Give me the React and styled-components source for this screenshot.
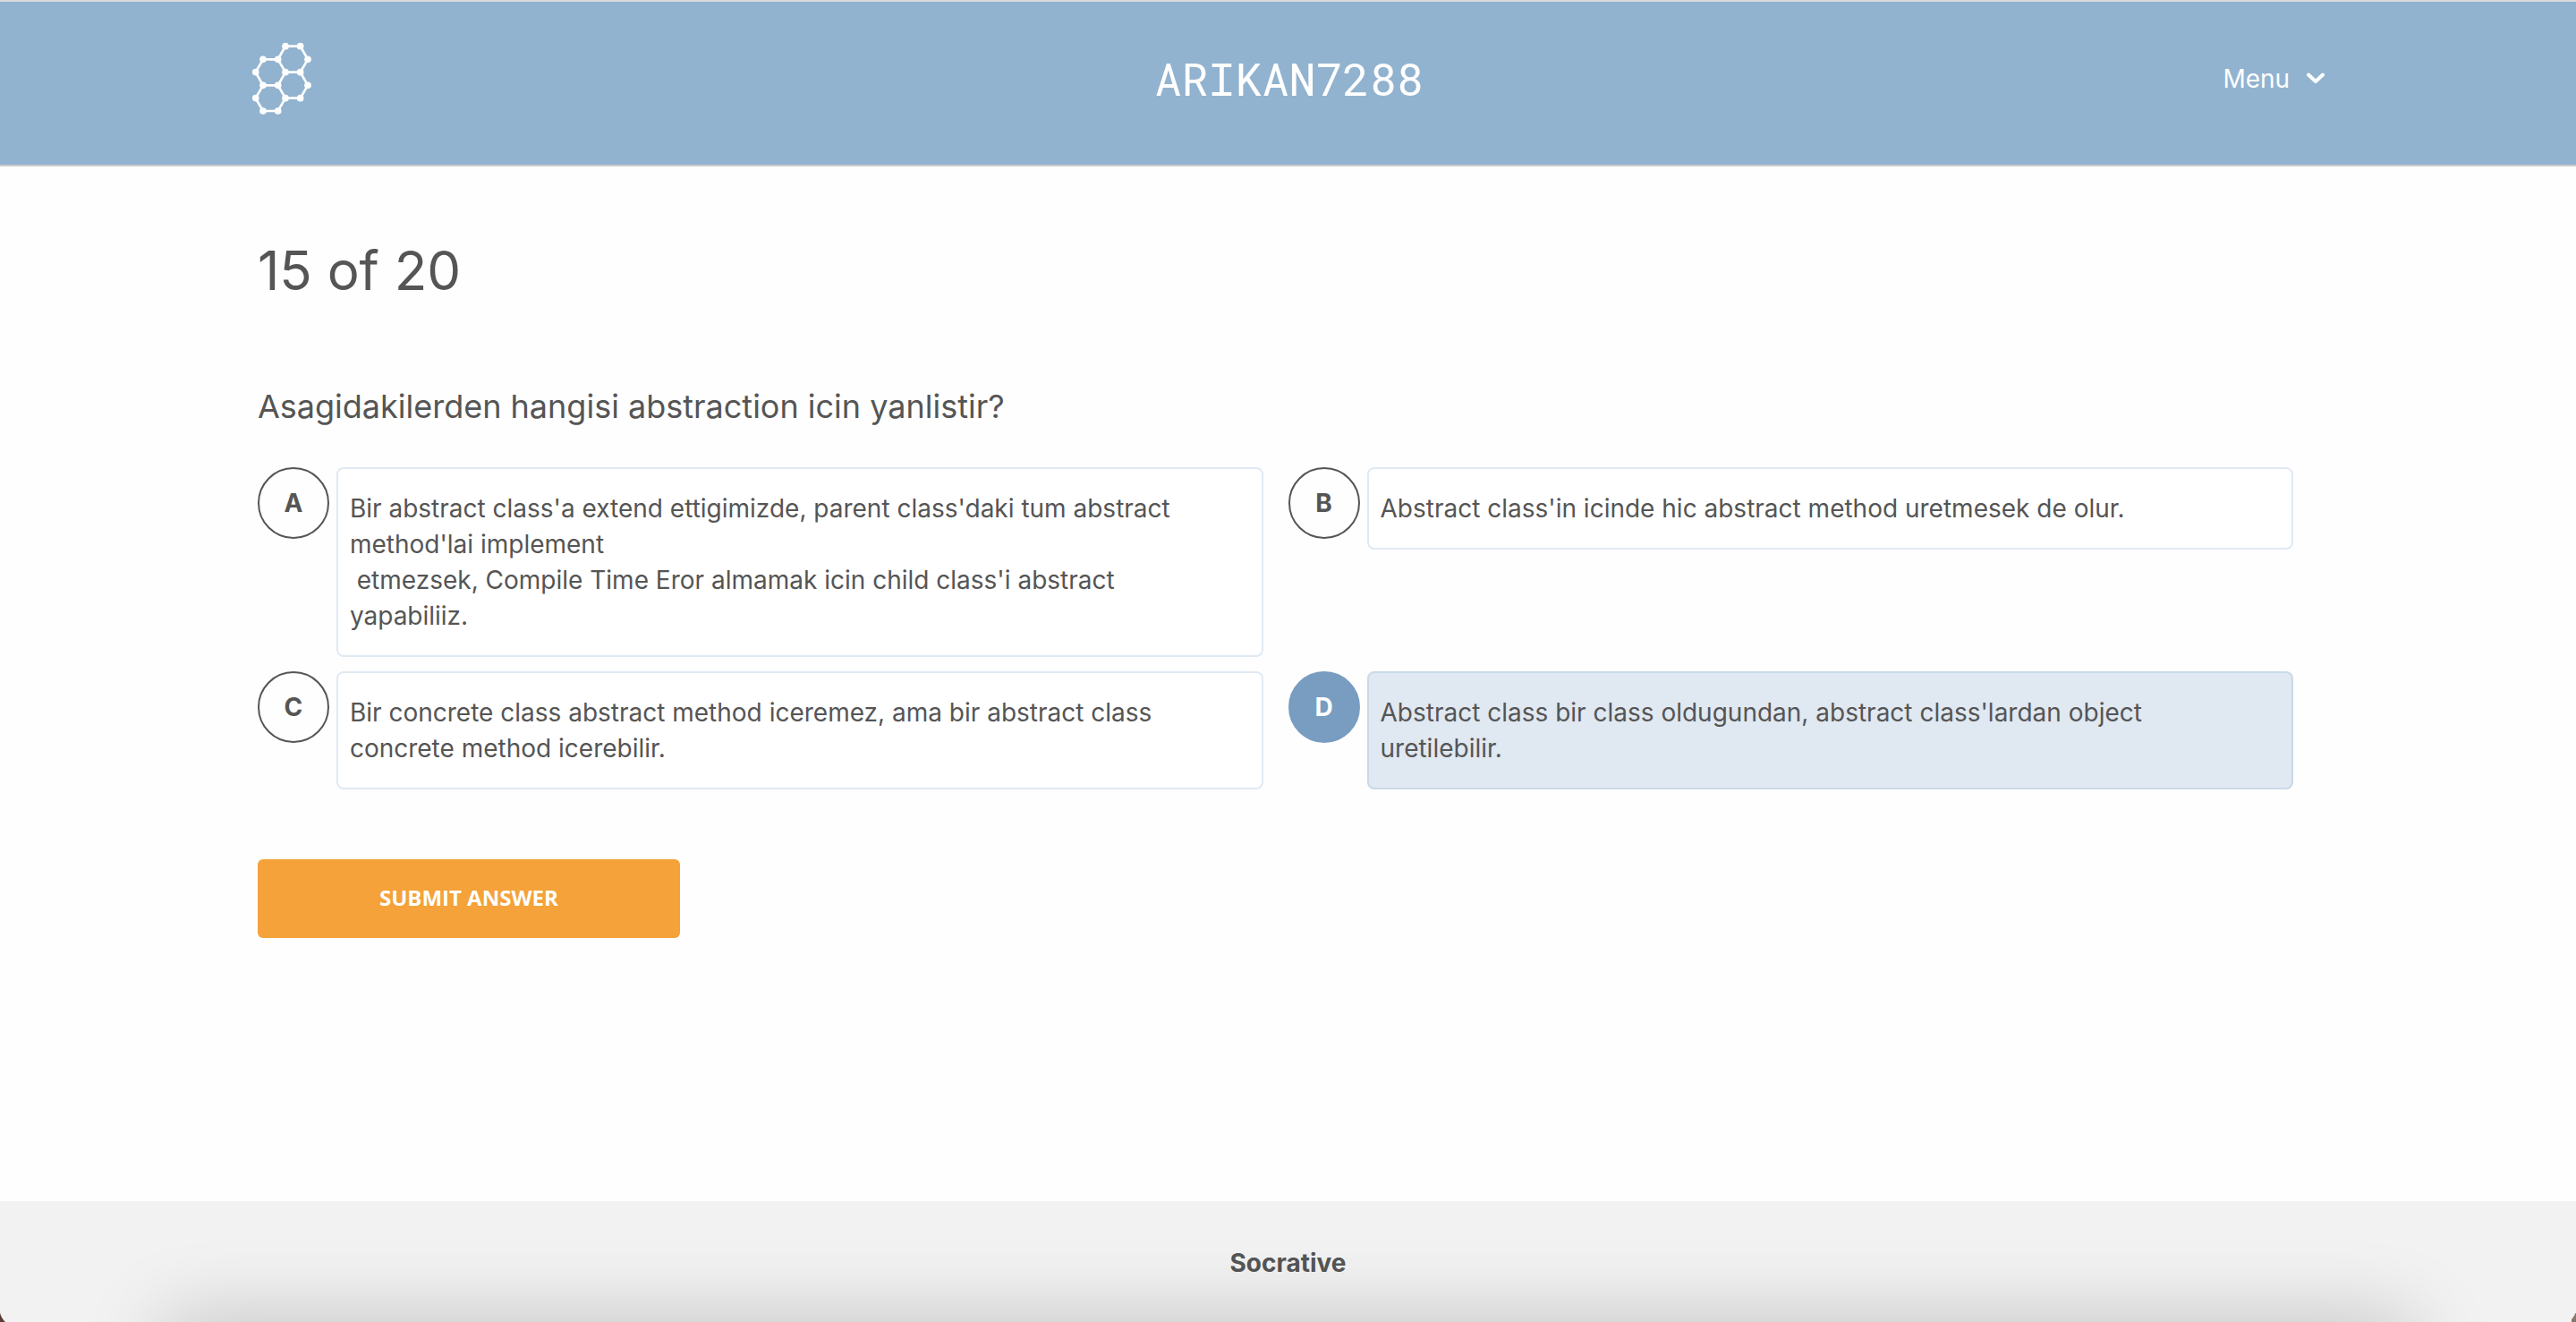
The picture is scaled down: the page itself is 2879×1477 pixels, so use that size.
import React, { useState } from "react";
import styled, { createGlobalStyle } from "styled-components";

const GlobalStyle = createGlobalStyle`
  *, *::before, *::after { box-sizing: border-box; }
  body {
    margin: 0;
    background: #fefefe;
    color: #555555;
    font-family: Inter, "Liberation Sans", sans-serif;
    font-size: 28px;
    line-height: 40px;
  }
`;

const Page = styled.div`
  display: flex;
  flex-direction: column;
  min-height: 100vh;
`;

const Header = styled.header`
  display: grid;
  grid-template-columns: 1fr auto 1fr;
  align-items: start;
  height: 186px;
  padding: 44px calc(10% - 8px) 0 calc(10% - 6px);
  background: #92b3cf;
  border-top: 2px solid #d9d9d9;
  border-bottom: 2px solid #cccccc;
  color: #ffffff;
`;

const LogoLink = styled.a`
  display: flex;
  justify-self: start;
`;

const RoomName = styled.div`
  font-family: "Roboto Mono", "Liberation Mono", monospace;
  font-size: 50px;
  font-weight: 400;
  line-height: 84px;
`;

const MenuButton = styled.button`
  display: flex;
  align-items: center;
  justify-self: end;
  gap: 18px;
  height: 84px;
  padding: 0;
  border: 0;
  background: none;
  color: inherit;
  font: inherit;
  cursor: pointer;
`;

const Main = styled.main`
  flex: 1;
  padding: 80px 10%;
`;

const Progress = styled.h1`
  margin: 0 0 94px;
  font-size: 60px;
  font-weight: 400;
  line-height: 72px;
`;

const Question = styled.h2`
  margin: 0 0 46px;
  font-size: 36px;
  font-weight: 400;
  line-height: 44px;
`;

const Options = styled.div`
  display: grid;
  grid-template-columns: 1fr 1fr;
  align-items: start;
  gap: 16px 28px;
  margin-bottom: 78px;
  padding-right: 28px;
`;

const Option = styled.label`
  display: grid;
  grid-template-columns: 80px 1fr;
  align-items: start;
  column-gap: 8px;
  cursor: pointer;
`;

const Choice = styled.span`
  display: grid;
  place-items: center;
  height: 80px;
  color: ${(p) => (p.$selected ? "#ffffff" : "#555555")};
  font-weight: 700;

  > * { grid-area: 1 / 1; }
`;

const Radio = styled.input`
  appearance: none;
  width: 80px;
  height: 80px;
  margin: 0;
  border: 2px solid #555555;
  border-radius: 50%;
  cursor: pointer;

  &:checked {
    border-color: #789dc1;
    background: #789dc1;
  }
`;

const Answer = styled.span`
  padding: 24px 60px 24px 13px;
  border: 2px solid ${(p) => (p.$selected ? "#c9d9e8" : "#e0e9f3")};
  border-radius: 8px;
  background: ${(p) => (p.$selected ? "#e0e8f1" : "#ffffff")};
  white-space: pre-wrap;
`;

const Submit = styled.button`
  width: 472px;
  height: 88px;
  padding: 0 0 4px;
  border: 0;
  border-radius: 6px;
  background: #f4a239;
  color: #ffffff;
  font-family: "Open Sans", "Liberation Sans", sans-serif;
  font-size: 24px;
  font-weight: 700;
  cursor: pointer;
`;

const Footer = styled.footer`
  position: relative;
  overflow: hidden;
  padding: 51px 0 48px;
  background:
    radial-gradient(circle at 20px 0, transparent 20px, #5b3b35 21px) left bottom / 7px 15px no-repeat,
    radial-gradient(circle at -15px -7px, transparent 20px, #85786f 21px) right bottom / 5px 10px no-repeat,
    #f2f2f2;
  font-weight: 700;
  line-height: 36px;
  text-align: center;

  &::after {
    content: "";
    position: absolute;
    top: 100%;
    left: 184px;
    right: 184px;
    height: 80px;
    box-shadow: 0 0 90px rgba(0, 0, 0, 0.22);
  }
`;

const nodes = [
  [177, 155], [227, 155], [252, 199], [227, 242], [177, 242], [152, 199],
  [102, 199], [77, 242], [102, 286], [152, 286], [252, 286], [227, 329],
  [177, 329], [152, 372], [102, 372], [77, 329],
];

function Logo() {
  return (
    <svg width="66" height="84" viewBox="66 138 198 252" fill="none" stroke="#fff" strokeWidth="8" role="img" aria-label="Socrative">
      <path d="M177 155H227L252 199L227 242H177L152 199ZM152 199H102L77 242L102 286H152L177 242M227 242L252 286L227 329H177L152 286M177 329L152 372H102L77 329L102 286" />
      {nodes.map(([x, y]) => (
        <circle key={`${x}-${y}`} cx={x} cy={y} r="11.5" fill="#fff" stroke="none" />
      ))}
    </svg>
  );
}

function Chevron() {
  return (
    <svg width="22" height="14" viewBox="0 0 22 14" fill="none" stroke="#fff" strokeWidth="4" strokeLinecap="round" strokeLinejoin="round" aria-hidden="true">
      <path d="M3 2.5L11 10L19 2.5" />
    </svg>
  );
}

const options = [
  { id: "A", text: "Bir abstract class'a extend ettigimizde, parent class'daki tum abstract method'lai implement\n etmezsek, Compile Time Eror almamak icin child class'i abstract yapabiliiz." },
  { id: "B", text: "Abstract class'in icinde hic abstract method uretmesek de olur." },
  { id: "C", text: "Bir concrete class abstract method iceremez, ama bir abstract class concrete method icerebilir." },
  { id: "D", text: "Abstract class bir class oldugundan, abstract class'lardan object uretilebilir." },
];

export default function App() {
  const [selected, setSelected] = useState("D");

  return (
    <Page>
      <GlobalStyle />
      <Header>
        <LogoLink href="#"><Logo /></LogoLink>
        <RoomName>ARIKAN7288</RoomName>
        <MenuButton type="button">Menu<Chevron /></MenuButton>
      </Header>
      <Main>
        <Progress>15 of 20</Progress>
        <Question id="question">Asagidakilerden hangisi abstraction icin yanlistir?</Question>
        <Options role="radiogroup" aria-labelledby="question">
          {options.map(({ id, text }) => (
            <Option key={id} htmlFor={`option-${id}`}>
              <Choice $selected={selected === id}>
                <Radio
                  type="radio"
                  name="answer"
                  id={`option-${id}`}
                  checked={selected === id}
                  onChange={() => setSelected(id)}
                />
                <span>{id}</span>
              </Choice>
              <Answer $selected={selected === id}>{text}</Answer>
            </Option>
          ))}
        </Options>
        <Submit type="button">SUBMIT ANSWER</Submit>
      </Main>
      <Footer>Socrative</Footer>
    </Page>
  );
}
